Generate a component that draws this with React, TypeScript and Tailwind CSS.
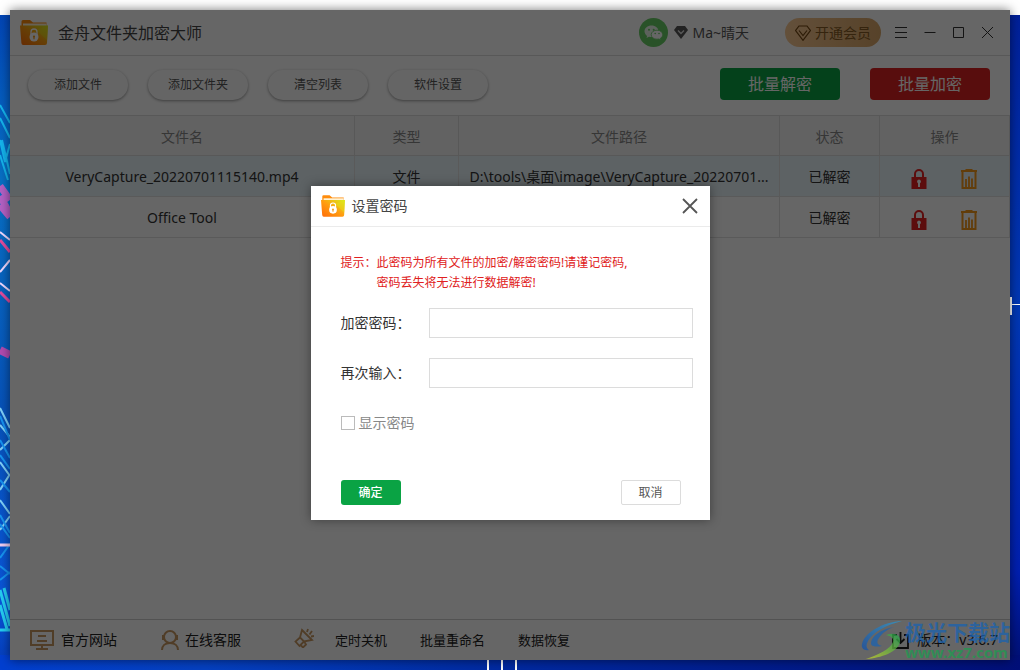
import type { ReactNode } from "react";

interface FileRow {
  id: number;
  name: string;
  type: string;
  path: string;
  status: string;
}

const files: FileRow[] = [
  {
    id: 1,
    name: "VeryCapture_20220701115140.mp4",
    type: "文件",
    path: "D:\\tools\\桌面\\image\\VeryCapture_20220701...",
    status: "已解密",
  },
  { id: 2, name: "Office Tool", type: "", path: "", status: "已解密" },
];

const toolbarItems = ["添加文件", "添加文件夹", "清空列表", "软件设置"];

function FolderIcon({ id, className }: { id: string; className: string }) {
  return (
    <svg viewBox="0 0 28 25" className={className} aria-hidden="true">
      <defs>
        <linearGradient id={id} x1="0" y1="1" x2="1" y2="0">
          <stop offset="0" stopColor="#ff6a08" />
          <stop offset="0.5" stopColor="#ff9d10" />
          <stop offset="1" stopColor="#d8ef1c" />
        </linearGradient>
      </defs>
      <path d="M1.5 1.5Q1.5 0 3 0H10L13 2.500H26.500V8H1.500Z" fill="#ff8c0c" />
      <path d="M3 3.500H26.500V8H3Z" fill="#fff3d6" />
      <path d="M0 5.500H28L27 23Q27 25 25 25H3.200Q1.500 25 1.400 23Z" fill={`url(#${id})`} />
      <path d="M28 5.500L27 20 16 10Z" fill="#e4e31c" opacity="0.45" />
      <circle cx="14" cy="17" r="4.500" fill="#fff" />
      <path d="M11 15V12a3 3 0 0 1 6 0V15" fill="none" stroke="#fff" strokeWidth="1.300" />
      <circle cx="14" cy="16.500" r="1.100" fill="#f29a1a" />
      <path d="M14 16.500v2.700" stroke="#f29a1a" strokeWidth="1.200" />
    </svg>
  );
}

function WechatIcon() {
  return (
    <svg viewBox="0 0 29 29" className="size-[29px]" aria-hidden="true">
      <circle cx="14.500" cy="14.500" r="14.500" fill="#67cc64" />
      <path d="M12.500 7.500c-4 0-7 2.600-7 5.800 0 1.900 1 3.500 2.600 4.600L7.500 20l2.500-1.300c.8.2 1.600.3 2.500.3 4 0 7-2.500 7-5.700s-3-5.800-7-5.800Z" fill="#e8f5e8" />
      <path d="M18 12.200c-3.300 0-5.800 2-5.800 4.500s2.500 4.500 5.800 4.500c.7 0 1.300-.1 1.900-.2l2 1-.5-1.700c1.400-.9 2.300-2.100 2.300-3.600 0-2.500-2.400-4.500-5.700-4.500Z" fill="#fff" stroke="#67cc64" strokeWidth="0.800" />
      <circle cx="10" cy="11.700" r="1" fill="#67cc64" />
      <circle cx="14.700" cy="11.700" r="1" fill="#67cc64" />
      <circle cx="16.200" cy="15.500" r="0.800" fill="#67cc64" />
      <circle cx="20" cy="15.500" r="0.800" fill="#67cc64" />
    </svg>
  );
}

function LockIcon() {
  return (
    <svg viewBox="0 0 16 20" className="h-5 w-4" aria-hidden="true">
      <path d="M4 9V5a4 4 0 0 1 8 0v4" fill="none" stroke="#e62222" strokeWidth="2" />
      <path d="M.5 8h15v12H.5Z" fill="#e62222" />
      <path d="M8 10.500a2 2 0 0 1 1 3.700V18H7v-3.800a2 2 0 0 1 1-3.700Z" fill="#fff" />
    </svg>
  );
}

function TrashIcon() {
  return (
    <svg viewBox="0 0 16 20" className="h-5 w-4" fill="none" stroke="#f5981a" strokeWidth="2" aria-hidden="true">
      <path d="M0 2h16M4.500 1h7M1.500 3v16h13V3" />
      <path d="M5 10V18M8 7.500V18M11 9.500V18" strokeWidth="1.800" />
    </svg>
  );
}

function Wallpaper() {
  return (
    <svg className="absolute inset-0 size-full" viewBox="0 0 1020 670" preserveAspectRatio="none" aria-hidden="true">
      <defs>
        <linearGradient id="left-side" x1="0" y1="0" x2="0" y2="1">
          <stop offset="0" stopColor="#0245b5" />
          <stop offset="0.25" stopColor="#0870c4" />
          <stop offset="0.6" stopColor="#0752b8" />
          <stop offset="0.9" stopColor="#0a55d8" />
          <stop offset="1" stopColor="#043ab8" />
        </linearGradient>
        <linearGradient id="right-side" x1="0" y1="0" x2="0" y2="1">
          <stop offset="0" stopColor="#00209a" />
          <stop offset="0.45" stopColor="#0038b5" />
          <stop offset="0.85" stopColor="#001fb0" />
          <stop offset="1" stopColor="#000f70" />
        </linearGradient>
        <linearGradient id="bottom-side">
          <stop offset="0" stopColor="#023fd0" />
          <stop offset="0.2" stopColor="#0540c0" />
          <stop offset="0.5" stopColor="#0029a0" />
          <stop offset="1" stopColor="#000f78" />
        </linearGradient>
      </defs>
      <path d="M0 0H1020V15H0Z" fill="#fff" />
      <path d="M0 15H500V670H0Z" fill="url(#left-side)" />
      <path d="M500 15H1020V670H500Z" fill="url(#right-side)" />
      <path d="M0 655H1020V670H0Z" fill="url(#bottom-side)" />
      <g fill="none" strokeWidth="2">
        <path d="M0 105l10 18M0 118l10 20M0 140l5 22 5-18M0 155l8 25M2 140l8 34" stroke="#15b4ec" />
        <path d="M0 186l10 14M0 196l10 18M0 205l10 12" stroke="#b461c4" strokeWidth="7" />
        <path d="M0 232l10 8M0 272l10-12M0 283l10 8" stroke="#f0d9ff" />
        <path d="M0 240l10 12M0 292l10 10" stroke="#e24b9d" strokeWidth="3" />
        <path d="M0 350l10 5" stroke="#b04bb0" strokeWidth="8" />
        <path d="M0 408l10 20M0 425l10 12M0 450l10-10M0 462l10 14M0 490l10-16M0 500l10 14M0 530l10-14" stroke="#7fd0f8" />
        <path d="M0 416l10 24M0 440l10 18M0 455l10 14M0 480l10 12M0 515l10 18M0 524l10 14M0 558l10-14M0 566l10 8M0 580l10-8" stroke="#1794f0" />
        <path d="M0 545h10" stroke="#efcdf2" strokeWidth="3" />
        <path d="M0 590l10 36M4 588l6 22M0 605l7 24M0 630h10" stroke="#25cdf2" strokeWidth="3" />
      </g>
      <path d="M488 660V670M502 660V670M516 660V670M1011 297V315" stroke="#fff" strokeWidth="2" fill="none" />
      <path d="M1010 304.500H1020" stroke="#fff" fill="none" />
    </svg>
  );
}

function Watermark() {
  return (
    <div className="pointer-events-none absolute right-0 bottom-0 flex items-end whitespace-nowrap opacity-75">
      <svg viewBox="0 0 44 40" className="h-10 w-11" aria-hidden="true">
        <defs>
          <linearGradient id="swirl" x1="0" y1="1" x2="1" y2="0">
            <stop offset="0" stopColor="#1550a8" />
            <stop offset="1" stopColor="#2e9ad0" />
          </linearGradient>
          <linearGradient id="tail" x1="0" y1="1" x2="1" y2="0">
            <stop offset="0" stopColor="#c9d42a" />
            <stop offset="1" stopColor="#1fa050" />
          </linearGradient>
        </defs>
        <path d="M41 1C22 2 4 12 1 24c-1 4 2 7 7 6-3-2-3-5-1-9C12 12 25 5 41 1Z" fill="url(#swirl)" />
        <path d="M33 7C20 9 10 17 10 23c0 4 5 4 11 3-5-1-6-4-3-8 3-5 9-9 15-11Z" fill="#1c62b0" />
        <path d="M25 15c9-3 15 0 14 7C37 32 20 38 5 39c11-4 25-10 27-17 1-4-2-6-7-7Z" fill="url(#tail)" />
      </svg>
      <div className="flex flex-col">
        <span className="text-[21px] leading-6 font-bold text-[#1b63b0]">极光下载站</span>
        <span className="text-[15px] leading-4 font-bold text-[#1f9a50]">www.xz7.com</span>
      </div>
    </div>
  );
}

function TitleBar() {
  return (
    <header className="flex h-[46px] shrink-0 items-center border-b border-[#dcdcdc] pr-3.5 pl-[10px]">
      <FolderIcon id="folder-app" className="h-[25px] w-7" />
      <h1 className="ml-[10px] text-base font-normal text-[#444]">金舟文件夹加密大师</h1>
      <div className="ml-auto flex items-center">
        <WechatIcon />
        <svg viewBox="0 0 14 13" className="ml-1.5 h-[13px] w-3.5" aria-hidden="true">
          <path d="M3 0h8l3 4-7 9L0 4Z" fill="#555" />
          <path d="M4 4.500l3 3 3-3" fill="none" stroke="#ddd" strokeWidth="1.400" />
        </svg>
        <span className="ml-1 text-sm text-[#555]">Ma~晴天</span>
        <button className="ml-9 flex h-[29px] w-24 items-center justify-center gap-1 rounded-full bg-linear-to-r from-[#f8c893] to-[#d9a668] text-sm text-[#855a23]">
          <svg viewBox="0 0 16 16" className="size-4" fill="none" stroke="#704510" strokeWidth="1.200" aria-hidden="true">
            <path d="M4 1h8l3.400 4.500L8 15.300.6 5.500ZM4 5.500l4 5 4-5" />
          </svg>
          开通会员
        </button>
        <div className="ml-3 flex gap-[13px] text-[#333]">
          <WindowButton label="菜单"><path d="M2 2.500h12M2 7.500h12M2 12.500h12" /></WindowButton>
          <WindowButton label="最小化"><path d="M2.500 7.500h11" /></WindowButton>
          <WindowButton label="最大化"><path d="M2.500 2.500h10v10h-10Z" /></WindowButton>
          <WindowButton label="关闭"><path d="M2 2l11 11M13 2L2 13" /></WindowButton>
        </div>
      </div>
    </header>
  );
}

function WindowButton({ label, children }: { label: string; children: ReactNode }) {
  return (
    <button aria-label={label}>
      <svg viewBox="0 0 16 16" className="size-4" fill="none" stroke="currentColor">{children}</svg>
    </button>
  );
}

function Toolbar() {
  return (
    <div className="flex h-[59px] shrink-0 items-start gap-5 pt-3 pr-5 pl-[18px]">
      {toolbarItems.map((item) => (
        <button key={item} className="mt-0.5 h-[30px] w-[100px] rounded-full bg-[#fdfdfd] text-xs text-[#555] shadow-[0_1px_3px_#999]">
          {item}
        </button>
      ))}
      <div className="ml-auto flex gap-[30px] text-base text-white">
        <button className="h-8 w-[120px] rounded bg-[#0aa344]">批量解密</button>
        <button className="h-8 w-[120px] rounded bg-[#dc2222]">批量加密</button>
      </div>
    </div>
  );
}

function FileTable() {
  return (
    <table className="w-full table-fixed border-separate border-spacing-0 text-center text-sm text-[#333] [&_td]:h-[41px] [&_td]:border-r [&_td]:border-b [&_td]:border-[#e0e0e0] [&_td]:pt-0.5 [&_th]:h-[41px] [&_th]:border-t [&_th]:border-r [&_th]:border-b [&_th]:border-[#dcdcdc] [&_th]:pt-0.5 [&_th]:font-normal">
      <colgroup>
        <col className="w-[345px]" />
        <col className="w-[104px]" />
        <col />
        <col className="w-[100px]" />
        <col className="w-[130px]" />
      </colgroup>
      <thead className="bg-[#f5f5f5] text-[#888]">
        <tr>
          <th>文件名</th>
          <th>类型</th>
          <th>文件路径</th>
          <th>状态</th>
          <th>操作</th>
        </tr>
      </thead>
      <tbody>
        {files.map((file) => (
          <tr key={file.id} className="first:bg-[#e8f4fa]">
            <td>{file.name}</td>
            <td>{file.type}</td>
            <td className="whitespace-nowrap">{file.path}</td>
            <td>{file.status}</td>
            <td>
              <div className="flex justify-center gap-[34px] pt-1 pr-0.5">
                <button aria-label="加密"><LockIcon /></button>
                <button aria-label="删除"><TrashIcon /></button>
              </div>
            </td>
          </tr>
        ))}
      </tbody>
    </table>
  );
}

function StatusBar() {
  return (
    <footer className="mt-auto flex h-[41px] shrink-0 items-center border-t border-[#ccc] pr-3 pl-5 text-sm text-[#222]">
      <a href="#site" className="flex items-center gap-[7px]">
        <svg viewBox="0 0 24 20" className="h-5 w-6" fill="none" stroke="#c99862" strokeWidth="2" aria-hidden="true">
          <path d="M1 1h22v14H1ZM12 15v4M6 19h12M8 6h8M7 11h10" />
        </svg>
        官方网站
      </a>
      <a href="#service" className="ml-11 flex items-center gap-1.5">
        <svg viewBox="0 0 18 20" className="h-5 w-[18px]" fill="none" stroke="#c99862" strokeWidth="2" aria-hidden="true">
          <circle cx="9" cy="7" r="6" />
          <path d="M1 20c0-4 3-7 8-7s8 3 8 7M2 5v5M16 5v5" />
        </svg>
        在线客服
      </a>
      <svg viewBox="0 0 20 20" className="-mt-1 ml-[53px] size-5" fill="none" stroke="#c99862" strokeWidth="1.800" aria-hidden="true">
        <path d="M8 2l10 10-8 1.500-4-4ZM6 9.500l-4.500 4 4 4.500 4.500-4.500M7 17.500l2 2 3-3-1.500-2.500M13 4l1-3M15.500 6.500L18 3M17 8.500l3-.5" />
      </svg>
      <nav className="ml-[21px] flex gap-[33px] text-[13px]">
        <a href="#shutdown">定时关机</a>
        <a href="#rename">批量重命名</a>
        <a href="#recover">数据恢复</a>
      </nav>
      <svg viewBox="0 0 17 17" className="ml-auto size-[17px]" fill="none" stroke="#222" strokeWidth="1.800" aria-hidden="true">
        <path d="M5 3H1v13h15V3h-4M8.500 0v11M4.500 7l4 4 4-4" />
      </svg>
      <span className="ml-2">版本：v3.6.7</span>
    </footer>
  );
}

function PasswordField({ id, label }: { id: string; label: string }) {
  return (
    <div className="flex items-center">
      <label htmlFor={id} className="w-[88px] text-sm text-[#333]">{label}</label>
      <input id={id} type="password" className="h-[30px] min-w-0 flex-1 border border-[#dcdcdc] px-2 text-sm outline-none" />
    </div>
  );
}

function PasswordDialog() {
  return (
    <form role="dialog" aria-labelledby="dialog-title" className="w-[399px] bg-white pb-[15px] shadow-[0_0_10px_#0006]">
      <div className="flex h-[41px] items-center border-b border-[#ebebeb] pr-3 pl-[10px]">
        <FolderIcon id="folder-dialog" className="h-[22px] w-6" />
        <h2 id="dialog-title" className="ml-[7px] text-sm font-normal text-[#444]">设置密码</h2>
        <button type="button" aria-label="关闭" className="ml-auto">
          <svg viewBox="0 0 16 16" className="size-4" stroke="#555" strokeWidth="1.800">
            <path d="M1 1l14 14M15 1L1 15" />
          </svg>
        </button>
      </div>
      <div className="pt-[26px] pr-[17px] pl-[30px]">
        <div className="flex text-xs leading-5 text-[#e02020]">
          <span>提示：</span>
          <p>
            此密码为所有文件的加密/解密密码!请谨记密码,
            <br />
            密码丢失将无法进行数据解密!
          </p>
        </div>
        <div className="mt-[15px] flex flex-col gap-5">
          <PasswordField id="password" label="加密密码：" />
          <PasswordField id="password-again" label="再次输入：" />
        </div>
        <label className="mt-[25px] flex items-center gap-1 text-sm text-[#888]">
          <input type="checkbox" className="size-3.5 appearance-none border border-[#bbb] checked:bg-[#0aa344]" />
          显示密码
        </label>
        <div className="mt-[47px] flex justify-between pr-3 text-xs">
          <button type="submit" className="h-[25px] w-[60px] rounded-[3px] bg-[#0aa344] font-medium text-white">确定</button>
          <button type="button" className="h-[25px] w-[60px] rounded-[2px] border border-[#dcdcdc] text-[#555]">取消</button>
        </div>
      </div>
    </form>
  );
}

export default function App() {
  return (
    <div className="relative flex min-h-screen flex-col p-[10px] font-['Noto_Sans','Noto_Sans_CJK_SC',sans-serif]">
      <Wallpaper />
      <main className="relative flex flex-1 flex-col bg-white shadow-[0_0_10px_#0008]">
        <TitleBar />
        <Toolbar />
        <FileTable />
        <StatusBar />
        {/* modal layer */}
        <div className="absolute inset-0 flex items-center justify-center bg-black/60 pt-9">
          <PasswordDialog />
        </div>
        <Watermark />
      </main>
    </div>
  );
}
